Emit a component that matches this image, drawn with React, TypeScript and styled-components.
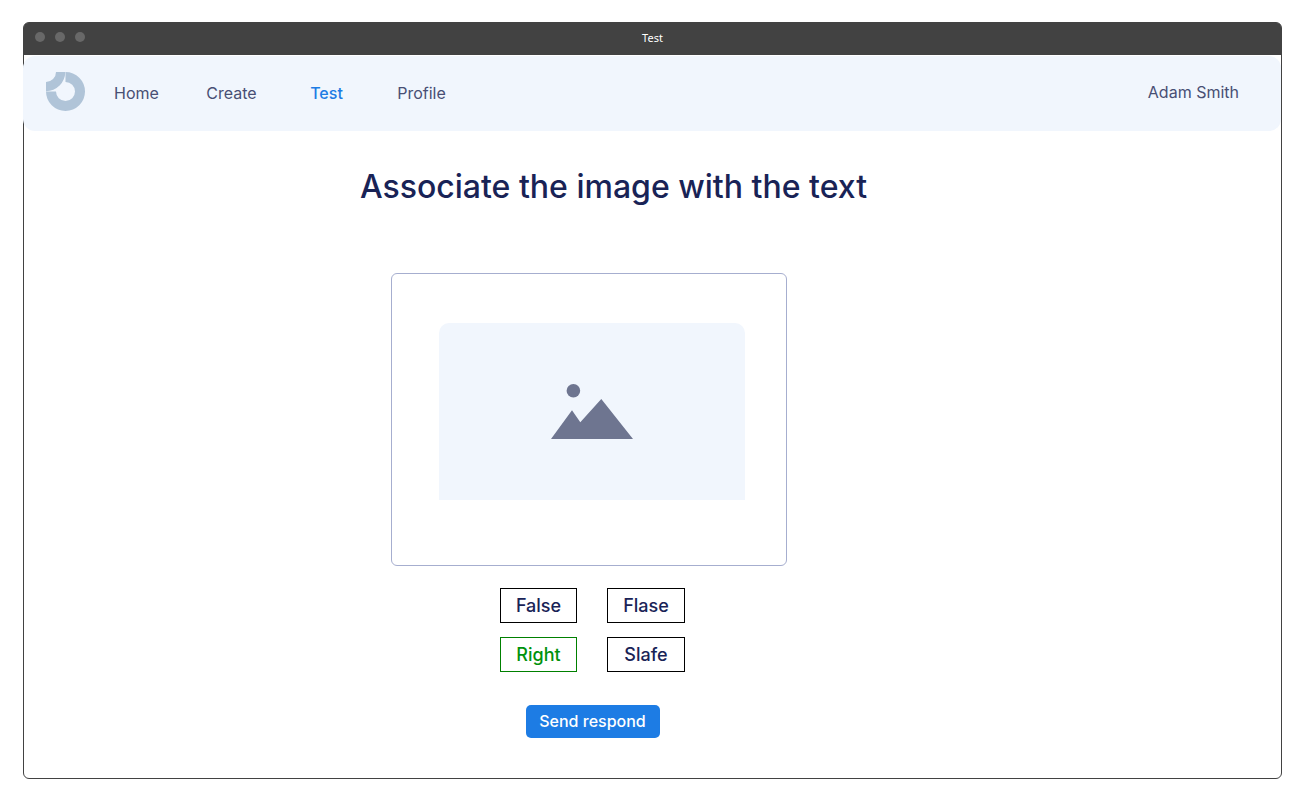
import React, { useState } from "react";
import styled, { createGlobalStyle } from "styled-components";

const colors = {
  frame: "#424242",
  dot: "#686868",
  surface: "#f1f6fd",
  logo: "#b0c4d8",
  navText: "#484f74",
  heading: "#192356",
  accent: "#1d7ce4",
  correct: "#00920c",
  cardBorder: "#a6aecf",
  picture: "#6e7590",
};

const GlobalStyle = createGlobalStyle`
  *, *::before, *::after { box-sizing: border-box; }
  body {
    margin: 0;
    background: #fff;
    font-family: Inter, "Liberation Sans", sans-serif;
  }
`;

const Page = styled.div`
  display: flex;
  min-height: 100vh;
  padding: 22px 19px 13px 23px;
`;

const Window = styled.div`
  flex: 1;
  display: flex;
  flex-direction: column;
  border: 1px solid ${colors.frame};
  border-radius: 6px;
`;

const TitleBar = styled.div`
  display: grid;
  grid-template-columns: 1fr auto 1fr;
  align-items: center;
  height: 32px;
  padding: 0 11px;
  background: ${colors.frame};
  border-radius: 4px 4px 0 0;
`;

const Dots = styled.div`
  display: flex;
  gap: 10px;
  padding-bottom: 4px;
`;

const Dot = styled.span`
  width: 10px;
  height: 10px;
  border-radius: 50%;
  background: ${colors.dot};
`;

const WindowTitle = styled.span`
  padding-bottom: 2px;
  color: #fff;
  font-family: "Noto Sans", sans-serif;
  font-size: 11px;
  line-height: 16px;
`;

const Header = styled.header`
  display: flex;
  align-items: center;
  height: 75px;
  margin: 1px 0 0 -1px;
  padding: 0 42px 0 23px;
  background: ${colors.surface};
  border-radius: 12px;
`;

const Logo = styled.svg`
  flex: none;
  width: 39px;
  height: 39px;
  margin-bottom: 4px;
`;

const Nav = styled.nav`
  display: flex;
  flex: 1;
  margin-left: 4px;
  padding-bottom: 2px;
`;

const NavLink = styled.a<{ $active?: boolean }>`
  width: 95px;
  color: ${(p) => (p.$active ? colors.accent : colors.navText)};
  font-size: 16px;
  font-weight: ${(p) => (p.$active ? 500 : 400)};
  line-height: 24px;
  text-align: center;
  text-decoration: none;
`;

const UserName = styled.span`
  padding-bottom: 4px;
  color: ${colors.navText};
  font-size: 16px;
  line-height: 24px;
`;

const Title = styled.h1`
  margin: 0;
  padding: 36px 78px 0 0;
  color: ${colors.heading};
  font-size: 32px;
  font-weight: 500;
  line-height: 40px;
  text-align: center;
`;

const Exercise = styled.main`
  display: flex;
  flex-direction: column;
  align-items: center;
  padding: 66px 127px 40px 0;
`;

const Card = styled.figure`
  width: 396px;
  margin: 0;
  padding: 49px 41px 65px 47px;
  border: 1px solid ${colors.cardBorder};
  border-radius: 6px;
`;

const Placeholder = styled.div`
  display: flex;
  align-items: center;
  justify-content: center;
  height: 177px;
  background: ${colors.surface};
  border-radius: 10px 10px 0 0;
`;

const Form = styled.form`
  display: flex;
  flex-direction: column;
  align-items: center;
  gap: 33px;
  padding: 22px 0 0 7px;
`;

const Answers = styled.div`
  display: grid;
  grid-template-columns: 77px 78px;
  gap: 14px 30px;
`;

const Answer = styled.button<{ $selected: boolean }>`
  height: 35px;
  padding: 0;
  background: #fff;
  border: 1px solid ${(p) => (p.$selected ? "#008000" : "#000")};
  color: ${(p) => (p.$selected ? colors.correct : colors.heading)};
  font-family: inherit;
  font-size: 18px;
  font-weight: 500;
  line-height: 24px;
  cursor: pointer;
`;

const SubmitButton = styled.button`
  min-width: 134px;
  height: 33px;
  padding: 0 13px 2px;
  background: ${colors.accent};
  border: 0;
  border-radius: 5px;
  color: #fff;
  font-family: inherit;
  font-size: 16px;
  font-weight: 500;
  line-height: 24px;
  cursor: pointer;
`;

const links = ["Home", "Create", "Test", "Profile"];
const answers = ["False", "Flase", "Right", "Slafe"];

export default function App() {
  const [selected, setSelected] = useState("Right");

  return (
    <Page>
      <GlobalStyle />
      <Window>
        <TitleBar>
          <Dots>
            <Dot />
            <Dot />
            <Dot />
          </Dots>
          <WindowTitle>Test</WindowTitle>
        </TitleBar>
        <Header>
          <Logo viewBox="0 0 78 78" fill={colors.logo} aria-hidden="true">
            <path d="M39 0A39 39 0 1 1 0 39H20A19 19 0 1 0 39 20Z" />
            <path d="M20 0H38.500A38.500 38.500 0 0 1 0 38.500V20A20 20 0 0 0 20 0Z" />
          </Logo>
          <Nav>
            {links.map((label) => (
              <NavLink key={label} href="#" $active={label === "Test"}>
                {label}
              </NavLink>
            ))}
          </Nav>
          <UserName>Adam Smith</UserName>
        </Header>
        <Title>Associate the image with the text</Title>
        <Exercise>
          <Card>
            <Placeholder>
              <svg width="82" height="55" viewBox="0 0 82 55" fill={colors.picture} role="img" aria-label="Picture">
                <circle cx="22.400" cy="6.800" r="6.800" />
                <path d="M0 55L21 26.300L29.300 38.300L50.300 15L82 55Z" />
              </svg>
            </Placeholder>
          </Card>
          <Form onSubmit={(e) => e.preventDefault()}>
            <Answers>
              {answers.map((label) => (
                <Answer
                  key={label}
                  type="button"
                  $selected={label === selected}
                  aria-pressed={label === selected}
                  onClick={() => setSelected(label)}
                >
                  {label}
                </Answer>
              ))}
            </Answers>
            <SubmitButton type="submit">Send respond</SubmitButton>
          </Form>
        </Exercise>
      </Window>
    </Page>
  );
}
